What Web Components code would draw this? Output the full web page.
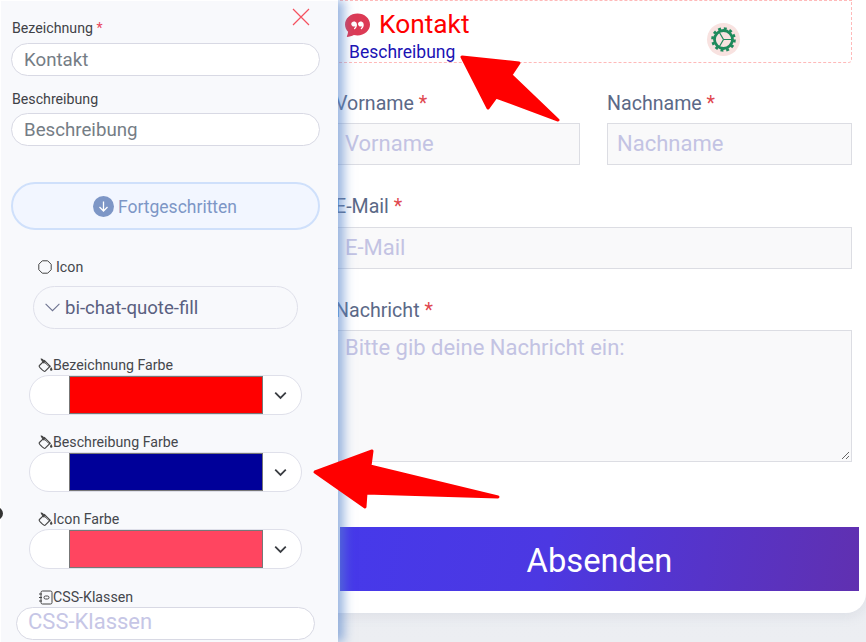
<!DOCTYPE html>
<html lang="de">
<head>
<meta charset="utf-8">
<title>Kontakt</title>
<style>
  html, body { margin: 0; height: 100%; overflow: hidden; }
  body { font-family: Roboto, "Liberation Sans", sans-serif; }
</style>
</head>
<body>
<app-page>
  <form-card slot="main">
    <form-head></form-head>
    <form-row>
      <form-field label="Vorname" hint="Vorname" gap="7"></form-field>
      <form-field label="Nachname" hint="Nachname" gap="7"></form-field>
    </form-row>
    <form-field label="E-Mail" hint="E-Mail" gap="8"></form-field>
    <form-field label="Nachricht" hint="Bitte gib deine Nachricht ein:" gap="7" area></form-field>
    <send-button>Absenden</send-button>
  </form-card>
  <side-panel slot="panel"></side-panel>
</app-page>

<script>
// kleine Helfer fuer die Icons
const CHEVRON = (w, s) => `<svg width="${w}" height="${w}" viewBox="0 0 16 16" fill="none" stroke="currentColor" stroke-width="${s}"><path d="M1.500 4.500L8 11l6.500-6.500"/></svg>`
const DRIP = `<svg width="15" height="15" viewBox="0 0 16 16" fill="none" stroke="#444" stroke-width="1.200"><path d="M6.800 5.800C5 3.800 3.600 1.600 3.500 1.100c.8-.2 2.400 1.500 3.600 3.300"/><path d="M7 2.800l6 6-5.300 5.300c-.5.500-1.500.1-2.900-1.100L2.600 10.800C1.300 9.400.9 8.400 1.500 8z"/><path d="M7 2.800c-.7.700 0 1.900 1.800 3.700s3.300 2.900 4.200 2.300" stroke-width="1"/><path d="M14 9.500c.8 1.100 1.400 2.100 1.400 2.800a1.300 1.300 0 0 1-2.600 0c0-.7.400-1.700 1.200-2.800z" fill="#444" stroke="none"/></svg>`

class AppPage extends HTMLElement {
  connectedCallback(){
    this.attachShadow({ mode : 'open' })
    this.shadowRoot.innerHTML = `
      <style>
        :host { display: block; position: relative; width: 866px; height: 642px; overflow: hidden;
          background: linear-gradient(#e4e6ed, #eceef2); }
        svg.arrow { position: absolute; left: 0; top: 0; z-index: 5; }
      </style>
      <slot name="main"></slot>
      <slot name="panel"></slot>
      <svg class="arrow" width="866" height="642" fill="#f00" stroke="#f00" stroke-width="3" stroke-linejoin="round">
        <polygon points="462,57 519,63 511,75 558,120 496,97 488,108"/>
        <polygon points="315,472 372,451 370,466 498,497 366,493 365,507"/>
      </svg>`
  }
}

class SidePanel extends HTMLElement {
  connectedCallback(){
    this.attachShadow({ mode : 'open' })
    this.shadowRoot.innerHTML = `
      <style>
        :host { display: block; position: absolute; left: 0; top: 0; bottom: 0; width: 338px; box-sizing: border-box;
          background: #f8f9fc; box-shadow: 6px 0 10px rgba(90,135,205,.62), inset 1px 1px 0 #fff; z-index: 2;
          color: #3f4247; font-size: 14.200px; overflow: hidden; }
        .close { position: absolute; left: 292px; top: 8px; color: #f4525f; }
        .dot { position: absolute; left: -10px; top: 507px; width: 13px; height: 13px; border-radius: 50%; background: #333; }
        .top { padding: 20px 18px 0 11px; display: flex; flex-direction: column; }
        label { display: block; line-height: 16px; padding-left: 1px; }
        label b { color: #e8475c; font-weight: 400; }
        .inp { height: 33px; box-sizing: border-box; border: 1px solid #d8d9e4; border-radius: 17px; background: #fff;
          padding-left: 12px; font-size: 18.700px; line-height: 33px; color: #757d85; margin-top: 7px; }
        .gap { margin-top: 15px; }
        .gap + .inp { margin-top: 6px; }
        .adv { margin-top: 36px; height: 48px; box-sizing: border-box; border: 2px solid #cfe0fb; border-radius: 24px;
          background: #f2f6ff; color: #7d96c6; font-size: 17.500px; display: flex; align-items: center; justify-content: center; gap: 4px; padding-right: 1px; }
        .adv span { padding-top: 2px; }
        .more { padding: 29px 36px 0 29px; }
        .lab { display: flex; align-items: center; height: 16px; padding-left: 9px; color: #45474c; }
        .sel { margin: 11px 4px 0 4px; height: 43px; box-sizing: border-box; border: 1px solid #dfe0ea; border-radius: 22px;
          display: flex; align-items: center; gap: 4px; padding-left: 10px; font-size: 18.600px; color: #5a6080; }
        .css { margin: 2px 0 0 -13px; width: 299px; height: 33px; box-sizing: border-box; border: 1px solid #d8d9e4; border-radius: 17px;
          background: #fff; padding-left: 11px; font-size: 22px; line-height: 27px; color: #c6c6e6; }
      </style>
      <div class="dot"></div>
      <svg class="close" width="18" height="18" viewBox="0 0 18 18" stroke="currentColor" stroke-width="1.200"><path d="M1 1l16 16M17 1L1 17"/></svg>
      <div class="top">
        <label>Bezeichnung <b>*</b></label>
        <div class="inp">Kontakt</div>
        <label class="gap">Beschreibung</label>
        <div class="inp">Beschreibung</div>
        <div class="adv">
          <svg width="21" height="21" viewBox="0 0 21 21"><circle cx="10.500" cy="10.500" r="10.500" fill="#7d96c6"/><path d="M10.500 5.500v9.500M6.500 11l4 4 4-4" fill="none" stroke="#fff" stroke-width="1.300"/></svg>
          <span>Fortgeschritten</span>
        </div>
      </div>
      <div class="more">
        <div class="lab"><svg width="14" height="14" viewBox="0 0 14 14" fill="none" stroke="#444" stroke-width="1" style="margin-right:4px"><polygon points="4.300,.8 9.700,.8 13.200,4.300 13.200,9.700 9.700,13.200 4.300,13.200 .8,9.700 .8,4.300"/></svg>Icon</div>
        <div class="sel"><span style="display:flex;color:#6d7390">${CHEVRON(17, 1)}</span>bi-chat-quote-fill</div>
        <color-field label="Bezeichnung Farbe" color="#ff0000" style="margin-top:28px"></color-field>
        <color-field label="Beschreibung Farbe" color="#000099" style="margin-top:19px"></color-field>
        <color-field label="Icon Farbe" color="#ff4560" style="margin-top:19px"></color-field>
        <div class="lab" style="margin-top:20px"><svg width="15" height="15" viewBox="0 0 15 15" fill="none" stroke="#444" stroke-width="1"><rect x="3" y="1" width="11" height="13" rx="1.500"/><rect x="6" y="6" width="5" height="3" rx="1.500"/><path d="M1 4h3M1 7.500h3M1 11h3"/></svg>CSS-Klassen</div>
        <div class="css">CSS-Klassen</div>
      </div>`
  }
}

class ColorField extends HTMLElement {
  connectedCallback(){
    const farbe = this.getAttribute('color')
    this.attachShadow({ mode : 'open' })
    this.shadowRoot.innerHTML = `
      <style>
        :host { display: block; }
        .lab { display: flex; align-items: center; height: 16px; padding-left: 9px; color: #45474c; }
        .box { margin-top: 2px; height: 40px; width: 273px; box-sizing: border-box; border: 1px solid #dfe0ea; border-radius: 20px;
          background: #fff; display: flex; align-items: stretch; padding-left: 39px; }
        .swatch { width: 194px; box-sizing: border-box; border: 1px solid #777; background: ${farbe}; }
        .arr { flex: 1; display: flex; align-items: center; justify-content: center; padding-right: 3px; color: #3a3d42; }
      </style>
      <div class="lab">${DRIP}${this.getAttribute('label')}</div>
      <div class="box"><div class="swatch"></div><div class="arr">${CHEVRON(13, 2.2)}</div></div>`
  }
}

class FormCard extends HTMLElement {
  connectedCallback(){
    this.attachShadow({ mode : 'open' })
    this.shadowRoot.innerHTML = `
      <style>
        :host { display: flex; flex-direction: column; box-sizing: border-box; width: 866px; height: 613px;
          padding: 0 14px 0 335px; background: #fff; border-radius: 0 0 20px 0; box-shadow: 0 4px 12px rgba(120,130,160,.12); }
      </style>
      <slot></slot>`
  }
}

class FormHead extends HTMLElement {
  connectedCallback(){
    this.attachShadow({ mode : 'open' })
    this.shadowRoot.innerHTML = `
      <style>
        :host { display: block; box-sizing: border-box; height: 63px; margin-bottom: 29px; position: relative;
          border: 1px dashed #ffb9b9; border-radius: 0 0 4px 0; }
        .t { display: flex; align-items: center; gap: 9px; padding: 7px 0 0 9px; height: 32px; color: #f00; font-size: 26.300px; line-height: 32px; }
        .d { padding: 2px 0 0 13px; color: #1a12b4; font-size: 17.500px; line-height: 20px; }
        .gear { position: absolute; left: 371px; top: 22px; width: 33px; height: 33px; border-radius: 50%; background: #f8e2e0;
          display: flex; align-items: center; justify-content: center; }
      </style>
      <div class="t"><svg width="25" height="25" viewBox="0 0 16 16" fill="#dc3a55"><path d="M16 8c0 3.866-3.582 7-8 7a9.060 9.060 0 0 1-2.347-.306c-.584.296-1.925.864-4.181 1.234-.2.032-.352-.176-.273-.362.354-.836.674-1.950.77-2.966C.744 11.370 0 9.760 0 8c0-3.866 3.582-7 8-7s8 3.134 8 7zM7.194 6.766a1.688 1.688 0 0 0-.227-.272 1.467 1.467 0 0 0-.469-.324l-.008-.004A1.785 1.785 0 0 0 5.734 6C4.776 6 4 6.746 4 7.667c0 .92.776 1.666 1.734 1.666.343 0 .662-.095.931-.26-.137.389-.39.804-.81 1.220a.405.405 0 0 0 .011.59c.173.16.447.155.614-.01 1.334-1.329 1.370-2.758.941-3.706a2.461 2.461 0 0 0-.227-.4zM11 9.073c-.136.389-.39.804-.81 1.220a.405.405 0 0 0 .012.59c.172.16.446.155.613-.01 1.334-1.329 1.370-2.758.942-3.706a2.466 2.466 0 0 0-.228-.4 1.686 1.686 0 0 0-.227-.273 1.466 1.466 0 0 0-.469-.324l-.008-.004A1.785 1.785 0 0 0 10.070 6c-.957 0-1.734.746-1.734 1.667 0 .92.777 1.666 1.734 1.666.343 0 .662-.095.931-.26z"/></svg>Kontakt</div>
      <div class="d">Beschreibung</div>
      <div class="gear"><svg width="29" height="29" viewBox="0 0 29 29" fill="none" stroke="#1f8a5c">
        <circle cx="14.500" cy="14.500" r="9" stroke-width="2.800"/>
        <circle cx="14.500" cy="14.500" r="11" stroke-width="2.600" stroke-dasharray="2.880 2.880"/>
        <path d="M14.500 14.500H23.500M14.500 14.500L10 6.700M14.500 14.500L10 22.300" stroke-width="1.200"/>
      </svg></div>`
  }
}

class FormRow extends HTMLElement {
  connectedCallback(){
    this.attachShadow({ mode : 'open' })
    this.shadowRoot.innerHTML = `
      <style>:host { display: grid; grid-template-columns: 245px 245px; column-gap: 27px; }</style>
      <slot></slot>`
  }
}

class FormField extends HTMLElement {
  connectedCallback(){
    const area = this.hasAttribute('area')
    this.attachShadow({ mode : 'open' })
    this.shadowRoot.innerHTML = `
      <style>
        :host { display: block; margin-bottom: 30px; }
        .lab { color: #5b6987; font-size: 19.600px; line-height: 24px; height: 24px; }
        .lab b { color: #e0474f; font-weight: 400; }
        .box { position: relative; margin-top: ${this.getAttribute('gap')}px; height: ${area ? 132 : 42}px; box-sizing: border-box; border: 1px solid #dcdde3; background: #f9f9fa;
          padding-left: 9px; color: #c3c3e3; font-size: 22px; line-height: ${area ? 33 : 39}px; }
        .grip { position: absolute; right: 1px; bottom: 1px; }
      </style>
      <div class="lab">${this.getAttribute('label')} <b>*</b></div>
      <div class="box">${this.getAttribute('hint')}${area ? '<svg class="grip" width="9" height="9" stroke="#666" viewBox="0 0 9 9"><path d="M1 8l7-7M5 8l3-3"/></svg>' : ''}</div>`
  }
}

class SendButton extends HTMLElement {
  connectedCallback(){
    this.attachShadow({ mode : 'open' })
    this.shadowRoot.innerHTML = `
      <style>
        :host { display: flex; align-items: center; justify-content: center; box-sizing: border-box; height: 64px; padding-top: 3px; margin: 35px -7px 0 5px;
          background: linear-gradient(100deg, #4639ea 0%, #4c38e2 40%, #6030b0 100%); color: #fff; font-size: 32.700px; }
      </style>
      <slot></slot>`
  }
}

customElements.define('app-page', AppPage)
customElements.define('side-panel', SidePanel)
customElements.define('color-field', ColorField)
customElements.define('form-card', FormCard)
customElements.define('form-head', FormHead)
customElements.define('form-row', FormRow)
customElements.define('form-field', FormField)
customElements.define('send-button', SendButton)
</script>
</body>
</html>
